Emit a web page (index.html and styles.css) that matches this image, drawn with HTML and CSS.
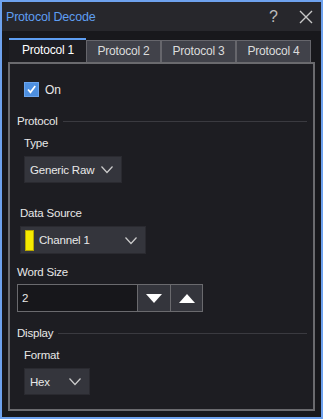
FILE: index.html
```html
<!DOCTYPE html>
<html lang="en">
<head>
  <meta charset="UTF-8" />
  <title>Protocol Decode</title>
  <link rel="stylesheet" href="styles.css">
</head>
<body>
  <div class="window">
    <div class="titlebar">
      <span class="title">Protocol Decode</span>
      <span class="help">?</span>
      <svg class="close" width="14" height="14" viewBox="0 0 14 14">
        <path d="M1 1 L13 13 M13 1 L1 13" stroke="#c8c8c8" stroke-width="1.4" fill="none"/>
      </svg>
    </div>

    <div class="content">
      <div class="tabs">
        <div class="tab active">Protocol 1</div>
        <div class="tab">Protocol 2</div>
        <div class="tab">Protocol 3</div>
        <div class="tab">Protocol 4</div>
      </div>

      <div class="panel">
        <label class="check-row">
          <span class="checkbox">
            <svg width="15" height="15" viewBox="0 0 15 15">
              <path d="M3.5 7.5 L6.3 10.8 L11.8 3.5" stroke="#fff" stroke-width="2" fill="none"/>
            </svg>
          </span>
          On
        </label>

        <div class="section">Protocol<span class="rule"></span></div>
        <div class="field-label indent">Type</div>
        <div class="dropdown indent dd-type">
          <span>Generic Raw</span>
          <svg class="chev" width="12" height="8" viewBox="0 0 12 8"><path d="M0.5 0.5 L6 6.5 L11.5 0.5" stroke="#ccc" stroke-width="1.2" fill="none"/></svg>
        </div>

        <div class="field-label source-label">Data Source</div>
        <div class="dropdown dd-source">
          <span class="swatch"></span>
          <span>Channel 1</span>
          <svg class="chev" width="12" height="8" viewBox="0 0 12 8"><path d="M0.5 0.5 L6 6.5 L11.5 0.5" stroke="#ccc" stroke-width="1.2" fill="none"/></svg>
        </div>

        <div class="field-label word-label">Word Size</div>
        <div class="spinner">
          <div class="spin-input">2</div>
          <div class="spin-btn">
            <svg width="16" height="9" viewBox="0 0 16 9"><path d="M0 0 L16 0 L8 9 Z" fill="#fff"/></svg>
          </div>
          <div class="spin-btn">
            <svg width="16" height="9" viewBox="0 0 16 9"><path d="M0 9 L16 9 L8 0 Z" fill="#fff"/></svg>
          </div>
        </div>

        <div class="section display">Display<span class="rule"></span></div>
        <div class="field-label indent">Format</div>
        <div class="dropdown indent dd-hex">
          <span>Hex</span>
          <svg class="chev" width="12" height="8" viewBox="0 0 12 8"><path d="M0.5 0.5 L6 6.5 L11.5 0.5" stroke="#ccc" stroke-width="1.2" fill="none"/></svg>
        </div>
      </div>
    </div>
  </div>
</body>
</html>
```

FILE: styles.css
```css
body {
  margin: 0;
  background: #1a1a1e;
  font-family: "Liberation Sans", Arial, sans-serif;
  font-size: 11.5px;
  letter-spacing: -0.2px;
  color: #e8e8e8;
}

.window {
  width: 323px;
  height: 419px;
  box-sizing: border-box;
  border: 2px solid #6ea2ee;
  background: #18181c;
  display: flex;
  flex-direction: column;
}

.titlebar {
  height: 29px;
  background: #27272c;
  display: flex;
  align-items: center;
  padding: 0 0 0 4px;
}

.title {
  color: #5e9ef2;
  font-size: 12.5px;
  flex: 1;
  margin-top: 1px;
}

.help {
  color: #bcbcbc;
  font-size: 16px;
  width: 30px;
  margin-top: 1px;
}

.close {
  margin-right: 8px;
  margin-top: 1px;
}

.content {
  flex: 1;
  padding: 7px 6px 6px 6px;
  display: flex;
  flex-direction: column;
}

.tabs {
  display: flex;
  margin-left: 1px;
  height: 24px;
  align-items: flex-end;
}

.tab {
  width: 75px;
  height: 22px;
  box-sizing: border-box;
  background: #41424a;
  border: 1px solid #66666c;
  border-bottom: none;
  color: #dcdcdc;
  text-align: center;
  line-height: 21px;
  font-size: 12px;
}

.tab.active {
  width: 77px;
  height: 24px;
  background: #1d1d22;
  border: none;
  border-top: 2px solid #5e9ef2;
  color: #fff;
  line-height: 20px;
  padding-left: 1px;
}

.panel {
  flex: 1;
  border: 2px solid #6a6a6e;
  background: #1d1d22;
  padding: 0 6px 0 7px;
}

.check-row {
  display: flex;
  align-items: center;
  gap: 6px;
  margin: 18px 0 0 7px;
  font-size: 12px;
}

.checkbox {
  width: 15px;
  height: 15px;
  background: #4d8fe0;
  border: 1px solid #6aa4ee;
  box-sizing: border-box;
  display: flex;
  align-items: center;
  justify-content: center;
}

.section {
  display: flex;
  align-items: center;
  margin-top: 16px;
  height: 16px;
}

.section .rule {
  flex: 1;
  height: 1px;
  background: #3a3a40;
  margin-left: 5px;
}

.section.display {
  margin-top: 13px;
}

.field-label {
  margin-top: 6px;
  height: 16px;
  line-height: 16px;
}

.indent {
  margin-left: 7px;
}

.dropdown {
  display: flex;
  align-items: center;
  height: 27px;
  background: #34353c;
  border: 1px solid #2a2a30;
  box-sizing: border-box;
  margin-top: 5px;
  padding: 0 8px 0 5px;
}

.dropdown span {
  flex: 1;
}

.dropdown .chev {
  margin-top: 1px;
}

.dd-type {
  width: 98px;
}

.source-label {
  margin-top: 22px;
  margin-left: 3px;
}

.dd-source {
  width: 126px;
  margin-left: 3px;
  padding-left: 4px;
  height: 28px;
}

.swatch {
  flex: none !important;
  width: 7px;
  height: 19px;
  background: #f5ea00;
  border: 1px solid #b8a800;
  margin-right: 5px;
}

.word-label {
  margin-top: 10px;
}

.spinner {
  display: flex;
  margin-top: 4px;
  height: 28px;
}

.spin-input {
  width: 121px;
  box-sizing: border-box;
  border: 1px solid #6a6a6e;
  background: #17171b;
  padding-left: 4px;
  line-height: 26px;
}

.spin-btn {
  width: 33px;
  box-sizing: border-box;
  border: 1px solid #6a6a6e;
  border-left: none;
  background: #34353c;
  display: flex;
  align-items: center;
  justify-content: center;
}

.spin-btn:last-child {
  width: 32px;
}

.dd-hex {
  width: 66px;
}
```
